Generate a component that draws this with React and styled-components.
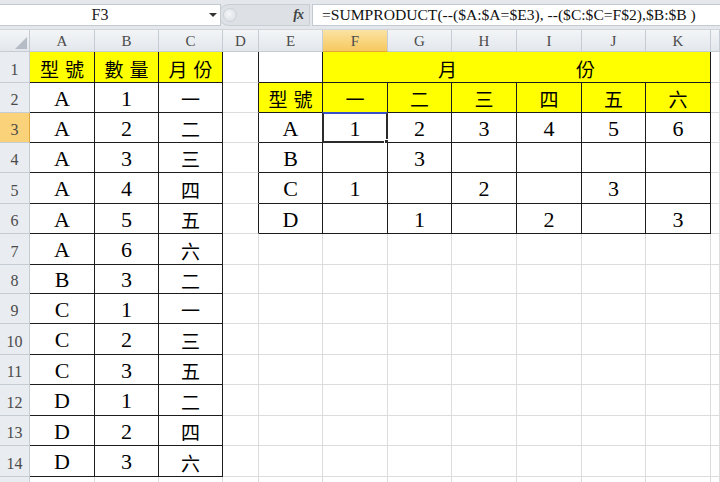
import styled, { createGlobalStyle, css } from 'styled-components';

const GlobalStyle = createGlobalStyle`
    html, body {
        margin: 0;
        padding: 0;
        background: #ffffff;
        overflow: hidden;
    }
`;

const COLS = [30, 65, 64, 64, 36, 64, 65, 64, 65, 65, 64, 65, 9];
const ROWS = [22, 31, 30, 30, 30, 31, 30, 31, 29, 30, 31, 30, 31, 30, 31, 12];
const LETTERS = ['', 'A', 'B', 'C', 'D', 'E', 'F', 'G', 'H', 'I', 'J', 'K', ''];

const YELLOW = '#ffff00';

// sheet contents, keyed "row,col"
const cells = {};
const put = (r, c, v, bg) => { cells[`${r},${c}`] = { v, bg }; };

const left = [
    ['A', '1', '一'], ['A', '2', '二'], ['A', '3', '三'], ['A', '4', '四'],
    ['A', '5', '五'], ['A', '6', '六'], ['B', '3', '二'], ['C', '1', '一'],
    ['C', '2', '三'], ['C', '3', '五'], ['D', '1', '二'], ['D', '2', '四'],
    ['D', '3', '六'],
];
put(1, 1, '型 號', YELLOW);
put(1, 2, '數 量', YELLOW);
put(1, 3, '月 份', YELLOW);
left.forEach((row, i) => row.forEach((v, j) => put(i + 2, j + 1, v)));

put(2, 5, '型 號', YELLOW);
['一', '二', '三', '四', '五', '六'].forEach((v, j) => put(2, j + 6, v, YELLOW));
const pivot = [
    ['A', '1', '2', '3', '4', '5', '6'],
    ['B', '', '3', '', '', '', ''],
    ['C', '1', '', '2', '', '3', ''],
    ['D', '', '1', '', '2', '', '3'],
];
pivot.forEach((row, i) => row.forEach((v, j) => put(i + 3, j + 5, v)));

const darkRight = (r, c) => {
    if (r >= 1 && r <= 14 && c >= 1 && c <= 3) return true;
    if (r >= 1 && r <= 6 && c >= 4 && c <= 11) {
        if (r === 1 && c >= 6 && c <= 10) return false;
        return true;
    }
    return false;
};

const darkBottom = (r, c) => {
    if (c >= 1 && c <= 3 && r >= 1 && r <= 14) return true;
    if (c >= 5 && c <= 11 && r >= 1 && r <= 6) return true;
    return false;
};

export default function App() {
    const body = [];
    for (let r = 1; r < ROWS.length; r++) {
        body.push(
            <RowHead key={`h${r}`} $active={r === 3}>{r < 15 ? r : ''}</RowHead>
        );
        for (let c = 1; c < COLS.length; c++) {
            if (r === 1 && c >= 7 && c <= 11) continue;
            if (r === 1 && c === 6) {
                body.push(
                    <Cell key={`${r},${c}`} $bg={YELLOW} $dr $db $span={6}>
                        <Han>月</Han>
                        <Han>份</Han>
                    </Cell>
                );
                continue;
            }
            const cell = cells[`${r},${c}`] || {};
            body.push(
                <Cell
                    key={`${r},${c}`}
                    $bg={cell.bg}
                    $dr={darkRight(r, c)}
                    $db={darkBottom(r, c)}
                    $selected={r === 3 && c === 6}
                >
                    <Value text={cell.v} />
                </Cell>
            );
        }
    }

    return (
        <Page>
            <GlobalStyle />
            <FormulaBar>
                <NameBox>
                    <NameText>F3</NameText>
                    <Caret />
                </NameBox>
                <FxPill>
                    <Knob />
                    <Fx>fx</Fx>
                </FxPill>
                <FormulaField>=SUMPRODUCT(--($A:$A=$E3), --($C:$C=F$2),$B:$B )</FormulaField>
            </FormulaBar>
            <Sheet>
                <Corner>
                    <svg width="12" height="12" viewBox="0 0 12 12">
                        <polygon points="12,0 12,12 0,12" fill="#b5bcc5" />
                    </svg>
                </Corner>
                {LETTERS.slice(1).map((l, i) => (
                    <ColHead key={i} $active={l === 'F'}>{l}</ColHead>
                ))}
                {body}
            </Sheet>
        </Page>
    );
}

function Value({ text }) {
    if (!text) return null;
    if (/[\u4e00-\u9fff]/.test(text)) {
        return (
            <>
                {text.split(' ').map((ch, i) => <Han key={i}>{ch}</Han>)}
            </>
        );
    }
    return <Latin>{text}</Latin>;
}

const Page = styled.div`
    width: 720px;
    height: 482px;
    overflow: hidden;
    background: #ffffff;
`;

const FormulaBar = styled.div`
    display: flex;
    align-items: stretch;
    height: 30px;
    box-sizing: border-box;
    padding: 4px 0 3px;
    background: #e4e8ed;
    border-bottom: 1px solid #d0d5db;
`;

const NameBox = styled.div`
    position: relative;
    width: 221px;
    display: flex;
    align-items: center;
    background: #ffffff;
    border: 1px solid #c4cad1;
    border-left: none;
    box-sizing: border-box;
`;

const NameText = styled.span`
    width: 200px;
    text-align: center;
    font-family: "Liberation Serif", serif;
    font-size: 16px;
    color: #222;
`;

const Caret = styled.span`
    width: 0;
    height: 0;
    margin-left: 9px;
    border-left: 4px solid transparent;
    border-right: 4px solid transparent;
    border-top: 4px solid #333;
`;

const FxPill = styled.div`
    width: 92px;
    margin-left: -3px;
    display: flex;
    align-items: center;
    justify-content: space-between;
    padding: 0 6px 0 4px;
    box-sizing: border-box;
    background: #dde1e6;
    border: 1px solid #c9ced5;
    border-radius: 12px 0 0 12px;
`;

const Knob = styled.span`
    width: 12px;
    height: 12px;
    border-radius: 50%;
    background: radial-gradient(circle at 40% 40%, #f4f6f8, #d7dbe0);
    border: 1px solid #cdd2d8;
`;

const Fx = styled.span`
    font-family: "Liberation Serif", serif;
    font-style: italic;
    font-weight: bold;
    font-size: 14px;
    color: #444;
    letter-spacing: -1px;
`;

const FormulaField = styled.div`
    flex: 1;
    margin-left: 2px;
    display: flex;
    align-items: center;
    padding-left: 9px;
    background: #ffffff;
    border: 1px solid #c4cad1;
    border-right: none;
    font-family: "Liberation Serif", serif;
    font-size: 15.6px;
    color: #111;
    white-space: nowrap;
`;

const Sheet = styled.div`
    display: grid;
    grid-template-columns: ${COLS.map((w) => `${w}px`).join(' ')};
    grid-template-rows: ${ROWS.map((h) => `${h}px`).join(' ')};
`;

const headBase = css`
    box-sizing: border-box;
    display: flex;
    justify-content: center;
    font-family: "Liberation Serif", serif;
    font-size: 15px;
    color: #4b4b4b;
    border-right: 1px solid #c6ccd3;
    border-bottom: 1px solid #c6ccd3;
    background: ${(p) =>
        p.$active
            ? 'linear-gradient(#fbe3a3, #f6c85f)'
            : 'linear-gradient(#f3f5f7, #e3e7ec)'};
`;

const Corner = styled.div`
    ${headBase};
    align-items: flex-end;
    justify-content: flex-end;
    padding: 0 2px 2px 0;
`;

const ColHead = styled.div`
    ${headBase};
    align-items: center;
    padding-top: 1px;
    ${(p) => p.$active && 'border-bottom-color: #e2a83a;'}
`;

const RowHead = styled.div`
    ${headBase};
    align-items: flex-end;
    padding-bottom: 3px;
    font-size: 16px;
    background: ${(p) => (p.$active ? '#f9d27a' : '#e9ecf0')};
    ${(p) => p.$active && 'border-right-color: #e2a83a;'}
`;

const Cell = styled.div`
    position: relative;
    box-sizing: border-box;
    display: flex;
    align-items: center;
    justify-content: center;
    gap: ${(p) => (p.$span ? '119px' : '6px')};
    padding-top: 2px;
    background: ${(p) => p.$bg || '#ffffff'};
    border-right: 1px solid ${(p) => (p.$dr ? '#1c1c1c' : '#dadcde')};
    border-bottom: 1px solid ${(p) => (p.$db ? '#1c1c1c' : '#dadcde')};
    ${(p) => p.$span && `grid-column: span ${p.$span};`}
    ${(p) =>
        p.$selected &&
        css`
            &::before {
                content: '';
                position: absolute;
                left: -1px;
                top: -1px;
                right: -1px;
                bottom: -1px;
                border: 2px solid #2b2b2b;
                border-top-color: #3a52c8;
            }
            &::after {
                content: '';
                position: absolute;
                right: -4px;
                bottom: -4px;
                width: 5px;
                height: 5px;
                background: #2b2b2b;
                border: 1px solid #ffffff;
            }
        `}
`;

const Latin = styled.span`
    font-family: "Liberation Serif", serif;
    font-size: 22px;
    color: #000;
`;

const Han = styled.span`
    font-family: "Noto Sans CJK TC", sans-serif;
    font-size: 19px;
    line-height: 1;
    color: #000;
`;
